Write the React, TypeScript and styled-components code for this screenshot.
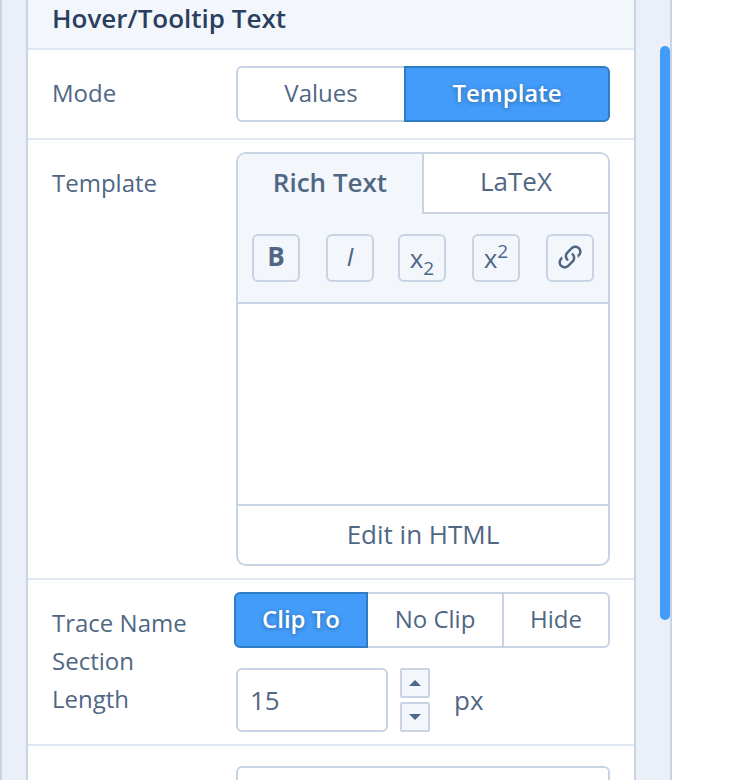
import React from 'react';
import styled, { createGlobalStyle } from 'styled-components';

const GlobalStyle = createGlobalStyle`
  html, body {
    margin: 0;
    padding: 0;
    background: #fff;
  }
  * {
    box-sizing: border-box;
  }
`;

const Page = styled.div`
  width: 730px;
  height: 780px;
  overflow: hidden;
  display: flex;
  align-items: stretch;
  padding-right: 58px;
  background: #fff;
  font-family: 'Open Sans', 'Liberation Sans', sans-serif;
  font-size: 24px;
  color: #506784;
`;

const Gutter = styled.div`
  width: 28px;
  flex: none;
  background: #ebf0f8;
  border-left: 2px solid #c8d4e3;
  border-right: 2px solid #c8d4e3;
`;

const Panel = styled.div`
  width: 606px;
  flex: none;
  background: #fff;
`;

const Track = styled.div`
  width: 38px;
  flex: none;
  background: #ebf0f8;
  border-left: 2px solid #c8d4e3;
  border-right: 2px solid #c8d4e3;
  display: flex;
  justify-content: flex-end;
`;

const Thumb = styled.div`
  width: 10px;
  height: 574px;
  margin-top: 46px;
  background: #439cf9;
  border-radius: 5px;
`;

const SectionTitle = styled.div`
  height: 50px;
  padding: 0 24px 12px;
  display: flex;
  align-items: center;
  background: #f3f6fb;
  border-bottom: 2px solid #dfe8f3;
  font-size: 26px;
  font-weight: 600;
  color: #2a3f5f;
`;

const Row = styled.div<{ $height: number; $top?: number }>`
  height: ${p => p.$height}px;
  padding: ${p => p.$top ?? 12}px 24px 0;
  display: flex;
  border-bottom: 2px solid #dfe8f3;
`;

const Label = styled.div<{ $top: number }>`
  width: 182px;
  flex: none;
  padding: ${p => p.$top}px 30px 0 0;
  line-height: 38px;
`;

const Controls = styled.div`
  flex: 1;
  min-width: 0;
  display: flex;
  flex-direction: column;
`;

const Group = styled.div<{ $inset?: boolean }>`
  display: flex;
  height: 56px;
  padding-left: ${p => (p.$inset ? 2 : 0)}px;
`;

const Segment = styled.div<{ $width: number; $active?: boolean }>`
  width: ${p => p.$width}px;
  margin-left: -2px;
  padding-bottom: 4px;
  flex: none;
  display: flex;
  align-items: center;
  justify-content: center;
  position: relative;
  z-index: ${p => (p.$active ? 1 : 0)};
  border: 2px solid ${p => (p.$active ? '#2f7bc4' : '#c8d4e3')};
  background: ${p => (p.$active ? '#439cf9' : '#fff')};
  color: ${p => (p.$active ? '#fff' : '#506784')};
  font-weight: ${p => (p.$active ? 600 : 400)};
  text-shadow: ${p => (p.$active ? '0 1px 4px rgba(0, 0, 0, 0.35)' : 'none')};

  &:first-child {
    margin-left: 0;
    border-radius: 6px 0 0 6px;
  }
  &:last-child {
    border-radius: 0 6px 6px 0;
  }
`;

const Editor = styled.div`
  width: 374px;
  height: 414px;
  margin-left: 2px;
  border: 2px solid #c8d4e3;
  border-radius: 10px;
  overflow: hidden;
  display: flex;
  flex-direction: column;
  font-size: 26px;
`;

const Tabs = styled.div`
  display: flex;
  height: 60px;
  flex: none;
`;

const Tab = styled.div<{ $active?: boolean }>`
  display: flex;
  align-items: center;
  justify-content: center;
  padding-bottom: 4px;
  flex: ${p => (p.$active ? '0 0 184px' : '1')};
  background: ${p => (p.$active ? '#f3f6fb' : '#fff')};
  font-weight: ${p => (p.$active ? 600 : 400)};
  border-left: ${p => (p.$active ? 'none' : '2px solid #c8d4e3')};
  border-bottom: ${p => (p.$active ? 'none' : '2px solid #c8d4e3')};
`;

const Toolbar = styled.div`
  height: 90px;
  flex: none;
  padding: 20px 14px 0;
  display: flex;
  gap: 26px;
  background: #f3f6fb;
  border-bottom: 2px solid #c8d4e3;
`;

const ToolButton = styled.div<{ $lift?: number }>`
  width: 48px;
  height: 48px;
  padding-bottom: ${p => p.$lift ?? 0}px;
  flex: none;
  display: flex;
  align-items: center;
  justify-content: center;
  border: 2px solid #c8d4e3;
  border-radius: 6px;
  line-height: 1;

  &:nth-child(3) {
    margin-left: -2px;
  }

  sub,
  sup {
    font-size: 19px;
    line-height: 0;
  }
  sub {
    vertical-align: -7px;
  }
  sup {
    vertical-align: 10px;
  }
`;

const Canvas = styled.div`
  flex: 1;
  background: #fff;
`;

const EditorFooter = styled.div`
  height: 60px;
  flex: none;
  padding-bottom: 2px;
  display: flex;
  align-items: center;
  justify-content: center;
  border-top: 2px solid #c8d4e3;
`;

const NumberRow = styled.div`
  display: flex;
  align-items: center;
  margin-top: 20px;
  margin-left: 2px;
  font-size: 26px;
`;

const NumberInput = styled.div`
  width: 152px;
  height: 64px;
  padding: 0 12px;
  display: flex;
  align-items: center;
  border: 2px solid #c8d4e3;
  border-radius: 6px;
`;

const Stepper = styled.div`
  margin-left: 12px;
  display: flex;
  flex-direction: column;
  gap: 4px;
`;

const StepButton = styled.div`
  width: 30px;
  height: 30px;
  display: flex;
  align-items: center;
  justify-content: center;
  background: #f3f6fb;
  border: 2px solid #c8d4e3;
  border-radius: 2px;
`;

const Arrow = styled.span<{ $down?: boolean }>`
  width: 0;
  height: 0;
  border-left: 6px solid transparent;
  border-right: 6px solid transparent;
  border-${p => (p.$down ? 'top' : 'bottom')}: 6px solid #506784;
`;

const Unit = styled.span`
  margin-left: 24px;
`;

const NextBox = styled.div`
  width: 374px;
  height: 60px;
  margin: 20px 0 0 208px;
  border: 2px solid #c8d4e3;
  border-radius: 6px;
`;

const LinkIcon = () => (
  <svg width="30" height="30" viewBox="0 0 24 24" fill="currentColor">
    <path d="M10.59,13.41C11,13.8 11,14.44 10.59,14.83C10.2,15.22 9.56,15.22 9.17,14.83C7.22,12.88 7.22,9.71 9.17,7.76V7.76L12.71,4.22C14.66,2.27 17.83,2.27 19.78,4.22C21.73,6.17 21.73,9.34 19.78,11.29L18.29,12.78C18.3,11.96 18.17,11.14 17.89,10.36L18.36,9.88C19.54,8.71 19.54,6.81 18.36,5.64C17.19,4.46 15.29,4.46 14.12,5.64L10.59,9.17C9.41,10.34 9.41,12.24 10.59,13.41M13.41,9.17C13.8,8.78 14.44,8.78 14.83,9.17C16.78,11.12 16.78,14.29 14.83,16.24V16.24L11.29,19.78C9.34,21.73 6.17,21.73 4.22,19.78C2.27,17.83 2.27,14.66 4.22,12.71L5.71,11.22C5.7,12.04 5.83,12.86 6.11,13.65L5.64,14.12C4.46,15.29 4.46,17.19 5.64,18.36C6.81,19.54 8.71,19.54 9.88,18.36L13.41,14.83C14.59,13.66 14.59,11.76 13.41,10.59C13,10.2 13,9.56 13.41,9.17Z" />
  </svg>
);

export default function App() {
  return (
    <Page>
      <GlobalStyle />
      <Gutter />
      <Panel>
        <SectionTitle>Hover/Tooltip Text</SectionTitle>
        <Row $height={90} $top={16}>
          <Label $top={8}>Mode</Label>
          <Controls>
            <Group $inset>
              <Segment $width={170}>Values</Segment>
              <Segment $width={206} $active>Template</Segment>
            </Group>
          </Controls>
        </Row>
        <Row $height={440}>
          <Label $top={12}>Template</Label>
          <Controls>
            <Editor>
              <Tabs>
                <Tab $active>Rich Text</Tab>
                <Tab>LaTeX</Tab>
              </Tabs>
              <Toolbar>
                <ToolButton $lift={4}><b>B</b></ToolButton>
                <ToolButton $lift={4}><i>I</i></ToolButton>
                <ToolButton><span>x<sub>2</sub></span></ToolButton>
                <ToolButton><span>x<sup>2</sup></span></ToolButton>
                <ToolButton $lift={2}><LinkIcon /></ToolButton>
              </Toolbar>
              <Canvas />
              <EditorFooter>Edit in HTML</EditorFooter>
            </Editor>
          </Controls>
        </Row>
        <Row $height={166}>
          <Label $top={12}>Trace Name Section Length</Label>
          <Controls>
            <Group>
              <Segment $width={134} $active>Clip To</Segment>
              <Segment $width={138}>No Clip</Segment>
              <Segment $width={108}>Hide</Segment>
            </Group>
            <NumberRow>
              <NumberInput>15</NumberInput>
              <Stepper>
                <StepButton><Arrow /></StepButton>
                <StepButton><Arrow $down /></StepButton>
              </Stepper>
              <Unit>px</Unit>
            </NumberRow>
          </Controls>
        </Row>
        <NextBox />
      </Panel>
      <Track>
        <Thumb />
      </Track>
    </Page>
  );
}
